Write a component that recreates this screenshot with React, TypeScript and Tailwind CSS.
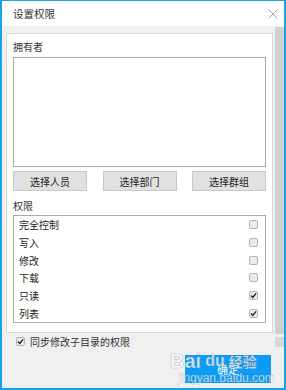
import React from "react";

const font = { fontFamily: '"Noto Sans CJK SC", "Noto Sans", sans-serif' };

function Box({ checked }: { checked?: boolean }) {
  return (
    <div className="w-[9px] h-[9px] rounded-[2px] border border-[#b4b4b4] bg-[#ececec] flex items-center justify-center">
      {checked && (
        <svg width="7" height="7" viewBox="0 0 7 7">
          <path d="M1 3.6 L2.8 5.4 L6 1.4" stroke="#222" strokeWidth="1.4" fill="none" />
        </svg>
      )}
    </div>
  );
}

const rows: [string, boolean][] = [
  ["完全控制", false],
  ["写入", false],
  ["修改", false],
  ["下载", false],
  ["只读", true],
  ["列表", true],
];

export default function App() {
  return (
    <div
      style={font}
      className="relative w-[286px] h-[390px] bg-white overflow-hidden border-l-2 border-r-[2px] border-b-[2px] border-t border-[#1aa1e6] text-[10px] text-[#222] flex flex-col"
    >
      <div className="h-[25px] shrink-0 bg-white flex items-center justify-between pl-[11px] pr-[6px]">
        <span className="text-[10.5px] text-[#333]">设置权限</span>
        <svg width="10" height="10" viewBox="0 0 10 10">
          <path d="M0.5 0.5 L9.5 9.5 M9.5 0.5 L0.5 9.5" stroke="#9a9a9a" strokeWidth="0.9" />
        </svg>
      </div>
      <div className="flex-1 flex bg-[#f0f0f0]">
        <div className="flex-1 flex flex-col pl-[4px] pr-[2px] pt-[7px]">
          <div className="h-[300px] bg-white border border-[#d8d8d8] flex flex-col px-[6px]">
            <div className="h-[22px] flex items-end pb-[2px] text-[#333]">拥有者</div>
            <div className="h-[110px] border border-[#a9a9a9] mt-[1px]" />
            <div className="flex justify-between mt-[4px]">
              {["选择人员", "选择部门", "选择群组"].map((t) => (
                <div
                  key={t}
                  className="w-[74px] h-[20px] bg-[#e1e1e1] border border-[#c8c8c8] flex items-center justify-center text-[#222]"
                >
                  {t}
                </div>
              ))}
            </div>
            <div className="h-[24px] flex items-center pt-[4px] text-[#333]">权限</div>
            <div className="h-[108px] border border-[#a9a9a9] flex flex-col">
              {rows.map(([t, c]) => (
                <div key={t} className="h-[18px] flex items-center justify-between pl-[5px] pr-[7px]">
                  <span>{t}</span>
                  <Box checked={c} />
                </div>
              ))}
            </div>
          </div>
          <div className="flex items-center gap-[5px] pl-[10px] h-[16px]">
            <Box checked />
            <span className="text-[#333]">同步修改子目录的权限</span>
          </div>
          <div className="flex justify-end pr-[2px] mt-[6px]">
            <div className="w-[86px] h-[28px] bg-[#0a9cf7] text-white flex items-center justify-center text-[11px]">
              确定
            </div>
          </div>
        </div>
        <div className="w-[9px] shrink-0 flex flex-col pt-[1px]">
          <div className="h-[307px] bg-[#d0d0d0]" />
          <div className="h-[3px]" />
          <div className="h-[10px] bg-[#d6d6d6]" />
        </div>
      </div>
      <div className="absolute left-[168px] top-[350px] flex flex-col items-start pointer-events-none">
        <div className="flex items-center gap-[4px] text-[20px] font-bold leading-none text-white/75" style={{ WebkitTextStroke: "0.6px rgba(120,120,120,0.5)", fontFamily: '"Liberation Sans", sans-serif' }}>
          <span>Bai</span>
          <span className="text-[16px] rounded-full">du</span>
          <span className="text-[14px]" style={font}>经验</span>
        </div>
        <div className="text-[12px] leading-none text-white/75 mt-[1px] pl-[8px]" style={{ WebkitTextStroke: "0.3px rgba(120,120,120,0.5)", fontFamily: '"Liberation Sans", sans-serif' }}>
          jingyan.baidu.com
        </div>
      </div>
    </div>
  );
}
